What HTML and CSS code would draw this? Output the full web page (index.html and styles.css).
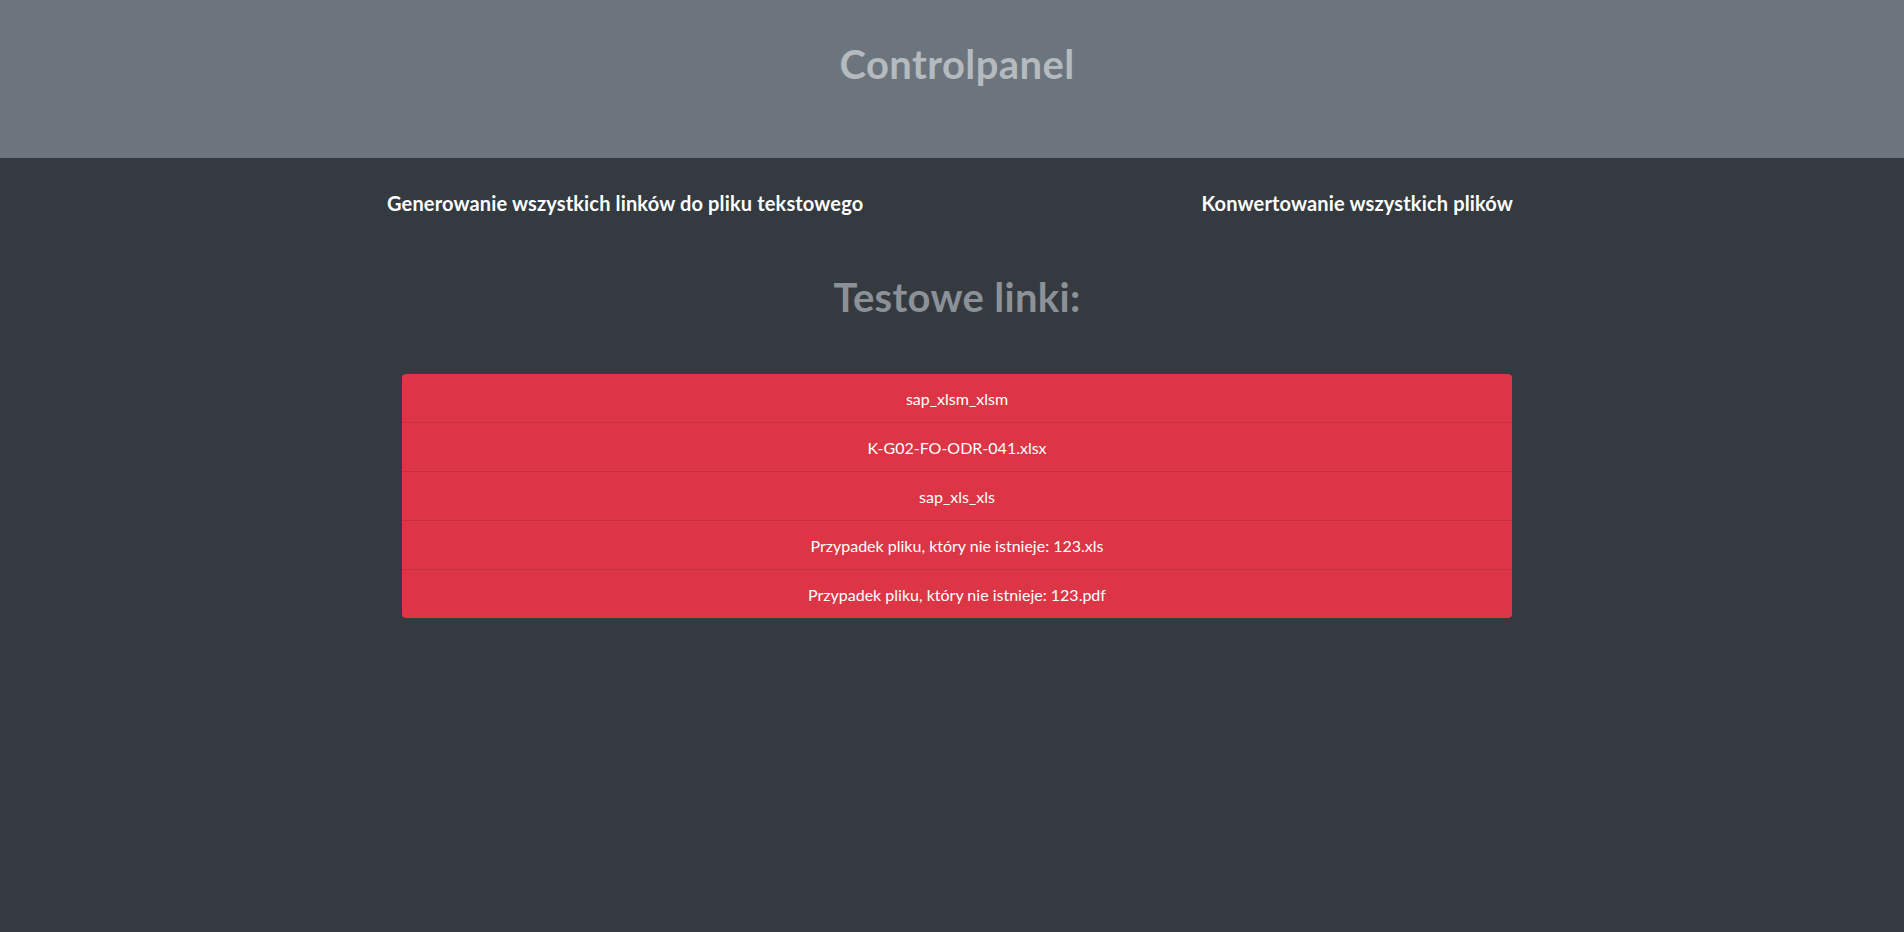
FILE: index.html
```html
<!DOCTYPE html>
<html lang="pl">
<head>
<meta charset="utf-8">
<title>Controlpanel</title>
<link rel="stylesheet" href="styles.css">
</head>
<body>
<header class="top">
  <h1 class="top-title">Controlpanel</h1>
</header>
<main class="main">
  <nav class="actions">
    <a class="action" href="#">Generowanie wszystkich linków do pliku tekstowego</a>
    <a class="action" href="#">Konwertowanie wszystkich plików</a>
  </nav>
  <h1 class="section-title">Testowe linki:</h1>
  <ul class="links">
    <li class="link-item">sap_xlsm_xlsm</li>
    <li class="link-item">K-G02-FO-ODR-041.xlsx</li>
    <li class="link-item">sap_xls_xls</li>
    <li class="link-item">Przypadek pliku, który nie istnieje: 123.xls</li>
    <li class="link-item">Przypadek pliku, który nie istnieje: 123.pdf</li>
  </ul>
</main>
</body>
</html>
```
FILE: styles.css
```css
html, body {
  margin: 0;
  padding: 0;
}
body {
  background: #343a40;
  font-family: "Lato", "Noto Sans", sans-serif;
  min-height: 932px;
}
.top {
  background: #6c757d;
  height: 158px;
  box-sizing: border-box;
  padding: 40px 0 0 10px;
}
.top-title {
  margin: 0;
  text-align: center;
  font-size: 40px;
  line-height: 48px;
  font-weight: 700;
  letter-spacing: 0.4px;
  color: #b5babf;
}
.main {
  width: 1140px;
  margin: 0 auto;
  padding-left: 10px;
}
.actions {
  display: flex;
  justify-content: space-between;
  padding: 30px 14px 0 0;
}
.action {
  color: #ffffff;
  text-decoration: none;
  font-size: 20px;
  line-height: 30px;
  font-weight: 700;
  letter-spacing: 0.15px;
}
.section-title {
  margin: 55px 0 0;
  text-align: center;
  font-size: 40px;
  line-height: 48px;
  font-weight: 700;
  letter-spacing: 0.3px;
  color: #8b9197;
}
.links {
  list-style: none;
  margin: 53px 15px 0;
  padding: 0;
  border-radius: 4px;
  overflow: hidden;
}
.link-item {
  background: #dc3545;
  color: #ffffff;
  text-align: center;
  font-size: 16px;
  line-height: 24px;
  padding: 13px 20px 11px;
  border-bottom: 1px solid #c3303e;
}
.link-item:last-child {
  border-bottom: none;
}
```
